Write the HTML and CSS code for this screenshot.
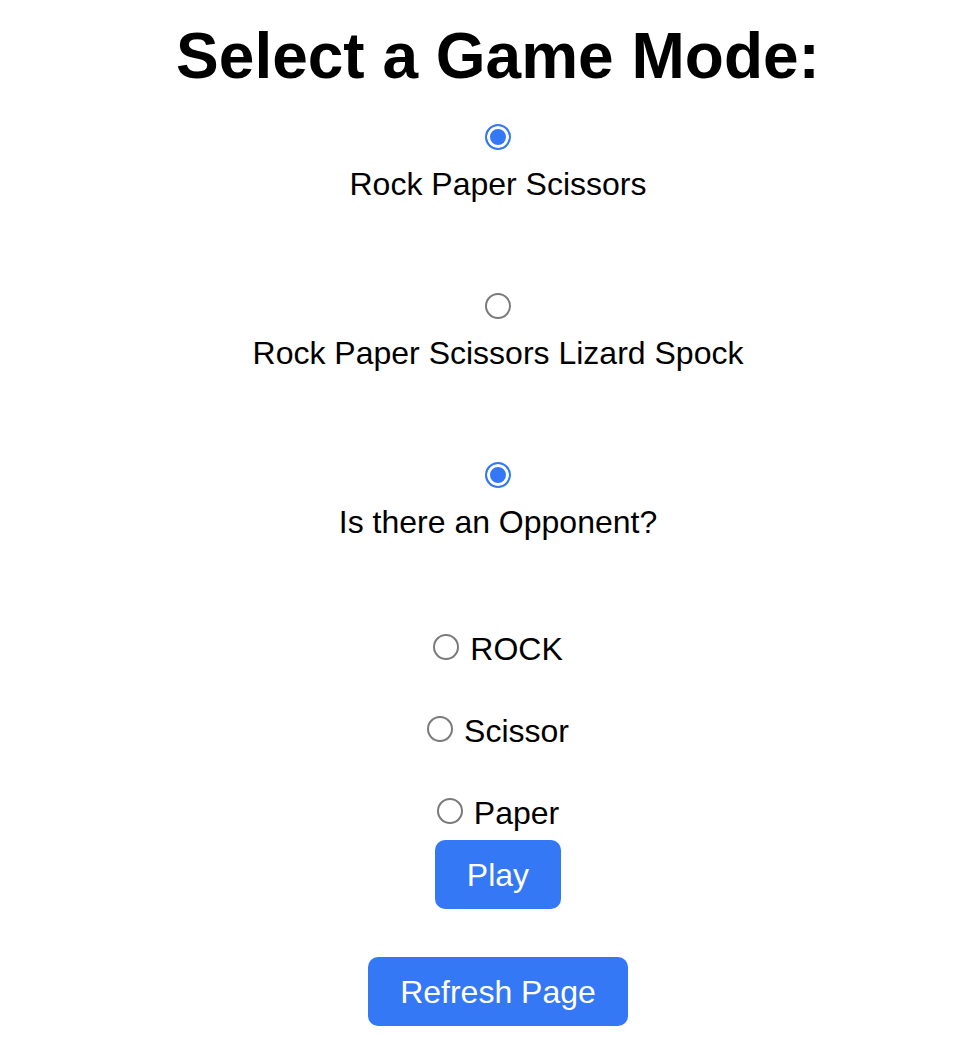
FILE: index.html
```html
<!DOCTYPE html>
<html lang="en">
<head>
<meta charset="utf-8">
<title>Game Mode</title>
<link rel="stylesheet" href="styles.css">
</head>
<body>
<main class="page">
  <h1 class="title">Select a Game Mode:</h1>
  <div class="modes">
    <label class="mode">
      <input class="radio" type="radio" name="mode" checked>
      <span class="mode-text">Rock Paper Scissors</span>
    </label>
    <label class="mode">
      <input class="radio" type="radio" name="mode">
      <span class="mode-text">Rock Paper Scissors Lizard Spock</span>
    </label>
    <label class="mode">
      <input class="radio" type="radio" name="opponent" checked>
      <span class="mode-text">Is there an Opponent?</span>
    </label>
  </div>
  <div class="choices">
    <label class="choice">
      <input class="radio" type="radio" name="choice">
      <span class="choice-text">ROCK</span>
    </label>
    <label class="choice">
      <input class="radio" type="radio" name="choice">
      <span class="choice-text">Scissor</span>
    </label>
    <label class="choice">
      <input class="radio" type="radio" name="choice">
      <span class="choice-text">Paper</span>
    </label>
  </div>
  <div class="actions">
    <button class="btn" type="button">Play</button>
    <button class="btn" type="button">Refresh Page</button>
  </div>
</main>
</body>
</html>
```

FILE: styles.css
```css
html, body {
  margin: 0;
  padding: 0;
  background: #ffffff;
}

body {
  font-family: "Liberation Sans", Arial, Helvetica, sans-serif;
  color: #000000;
}

.page {
  padding: 19px 0 0 16px;
  display: flex;
  flex-direction: column;
  align-items: center;
}

.title {
  margin: 0;
  font-size: 64px;
  font-weight: bold;
  line-height: 74px;
}

.modes {
  margin-top: 31px;
  display: flex;
  flex-direction: column;
  align-items: center;
  gap: 91px;
}

.mode {
  display: flex;
  flex-direction: column;
  align-items: center;
  gap: 16px;
}

.mode-text,
.choice-text {
  font-size: 32px;
  line-height: 36px;
  white-space: nowrap;
}

.radio {
  appearance: none;
  -webkit-appearance: none;
  margin: 0;
  width: 26px;
  height: 26px;
  border-radius: 50%;
  border: 2px solid #7a7a7a;
  background: #ffffff;
  box-sizing: border-box;
  flex: none;
}

.radio:checked {
  border: 2.5px solid #3478f6;
  background: #3478f6;
  box-shadow: inset 0 0 0 3px #ffffff;
}

.choices {
  margin-top: 91px;
  display: flex;
  flex-direction: column;
  align-items: center;
  gap: 46px;
}

.choice {
  display: flex;
  align-items: center;
  gap: 11px;
  height: 36px;
}

.choice .radio {
  margin-top: -4px;
}

.actions {
  margin-top: 9px;
  display: flex;
  flex-direction: column;
  align-items: center;
  gap: 48px;
}

.btn {
  font-family: "Liberation Sans", Arial, Helvetica, sans-serif;
  font-size: 32px;
  color: #ffffff;
  background: #3478f6;
  border: none;
  border-radius: 10px;
  height: 69px;
  padding: 0 32px;
  line-height: 36px;
  cursor: pointer;
}
```
